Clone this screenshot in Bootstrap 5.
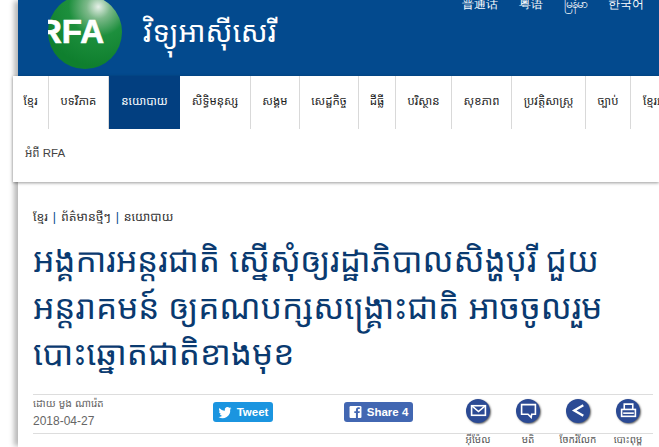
<!DOCTYPE html>
<html lang="km">
<head>
  <meta charset="UTF-8">
  <meta name="viewport" content="width=device-width, initial-scale=1.0">
  <title>RFA Khmer</title>
  <link href="https://cdn.jsdelivr.net/npm/bootstrap@5.3.0/dist/css/bootstrap.min.css" rel="stylesheet">
  <style>
    html, body { height: 447px; overflow: hidden; }
    body { background: #fff; font-family: "Liberation Sans", "Noto Sans Khmer", "Noto Sans", sans-serif; }
    .page-wrap { margin-left: 18px; height: 447px; width: 641px; box-shadow: -5px 0 5px -1px rgba(0,0,0,.28); }
    .site-head { height: 76px; background: #034a8e; color: #fff; overflow: hidden; }
    .site-logo { margin-left: 30px; margin-top: -5px; flex: 0 0 74px; }
    .site-name { font-size: 29px; margin-left: 21px; margin-top: 9px; line-height: 46px; white-space: nowrap; }
    .lang-list { margin-left: auto; margin-top: -6px; margin-right: 15px; gap: 21px; font-size: 12px; line-height: 20px; white-space: nowrap; }
    .menu-box { margin-left: -5px; width: 646px; height: 106px; background: #fff; box-shadow: 0 1px 3px rgba(0,0,0,.4); overflow: hidden; }
    .menu-row { height: 53px; white-space: nowrap; }
    .menu-cell { height: 53px; line-height: 50px; font-size: 11.5px; color: #222; border-right: 1px solid #d9d9d9; text-align: center; flex: none; }
    .menu-cell.on { background: #023f80; color: #fff; border-right: 0; }
    .menu-end { border-right: 0; text-align: left; padding-left: 12px; }
    .menu-low { line-height: 48px; color: #444; }
    .crumbs { margin: 27px 0 0 15px; font-size: 12.3px; line-height: 16px; color: #333; }
    .crumbs span { color: #034a8e; padding: 0 1.500px; }
    .story-title { margin: 13px 0 0 15px; font-size: 33.4px; line-height: 46.5px; font-weight: 400; color: #0a3a70; white-space: nowrap; }
    .story-meta { margin: 16px 0 0 15px; width: 620px; height: 40px; border-top: 1px solid #ddd; border-bottom: 1px solid #ddd; }
    .byline { width: 180px; font-size: 10.5px; line-height: 14px; color: #666; padding-top: 1px; }
    .byline div + div { font-size: 12px; line-height: 17px; margin-top: 3px; }
    .social-btn { height: 20px; border-radius: 3px; color: #fff; font: 700 11.5px/20px "Liberation Sans", sans-serif; margin-top: 7px; gap: 5px; }
    .tw-btn { width: 60px; background: #1b95e0; }
    .fb-btn { width: 69px; background: #4267b2; margin-left: 71px; }
    .tool-item { width: 50px; text-align: center; }
    .tool-list { margin-left: 40px; }
    .tool-ball { width: 24px; height: 24px; border-radius: 50%; background: #2b4a94; box-shadow: 1px 1px 2px rgba(0,0,0,.6); margin: 4px auto 0; }
    .tool-label { font-size: 10px; line-height: 12px; color: #555; margin-top: 11px; white-space: nowrap; }
  </style>
</head>
<body>
<div class="page-wrap">
  <div class="site-head d-flex">
    <svg class="site-logo" width="74" height="74" viewBox="0 0 74 74">
      <defs>
        <radialGradient id="ballFill" cx="0.68" cy="0.16" r="0.8">
          <stop offset="0" stop-color="#e6f0e8"/>
          <stop offset="0.2" stop-color="#7db98a"/>
          <stop offset="0.5" stop-color="#1d8f3d"/>
          <stop offset="1" stop-color="#0f7f2e"/>
        </radialGradient>
      </defs>
      <circle cx="37" cy="37" r="37" fill="url(#ballFill)"/>
      <text x="56" y="48" text-anchor="end" font-family="Liberation Sans" font-weight="700" font-size="33" stroke="#fff" stroke-width=".7" fill="#fff">RFA</text>
    </svg>
    <div class="site-name">វិទ្យុអាស៊ីសេរី</div>
    <div class="lang-list d-flex">
      <span>普通话</span><span>粤语</span><span>မြန်မာ</span><span>한국어</span>
    </div>
  </div>
  <div class="menu-box">
    <div class="menu-row d-flex">
      <div class="menu-cell" style="width:36px">ខ្មែរ</div>
      <div class="menu-cell" style="width:60px">បទវិភាគ</div>
      <div class="menu-cell on" style="width:71px">នយោបាយ</div>
      <div class="menu-cell" style="width:71px">សិទ្ធិមនុស្ស</div>
      <div class="menu-cell" style="width:49px">សង្គម</div>
      <div class="menu-cell" style="width:59px">សេដ្ឋកិច្ច</div>
      <div class="menu-cell" style="width:37px">ដីធ្លី</div>
      <div class="menu-cell" style="width:56px">បរិស្ថាន</div>
      <div class="menu-cell" style="width:60px">សុខភាព</div>
      <div class="menu-cell" style="width:74px">ប្រវត្តិសាស្ត្រ</div>
      <div class="menu-cell" style="width:45px">ច្បាប់</div>
      <div class="menu-cell menu-end" style="width:70px">ខ្មែរអាមេរិក</div>
    </div>
    <div class="menu-row d-flex">
      <div class="menu-cell menu-end menu-low" style="width:80px">អំពី RFA</div>
    </div>
  </div>
  <div class="crumbs">ខ្មែរ <span>|</span> ព័ត៌មានថ្មីៗ <span>|</span> នយោបាយ</div>
  <h1 class="story-title">អង្គការអន្តរជាតិ ស្នើសុំឲ្យរដ្ឋាភិបាលសិង្ហបុរី ជួយ<br>អន្តរាគមន៍ ឲ្យគណបក្សសង្គ្រោះជាតិ អាចចូលរួម<br>បោះឆ្នោតជាតិខាងមុខ</h1>
  <div class="story-meta d-flex">
    <div class="byline"><div>ដោយ មួង ណារ៉េត</div><div>2018-04-27</div></div>
    <div class="social-btn tw-btn d-flex justify-content-center">
      <svg width="14" height="20" viewBox="0 0 24 24" fill="#fff"><path d="M23 5.500c-.8.4-1.700.6-2.600.7.9-.6 1.600-1.400 2-2.500-.9.500-1.800.9-2.900 1.100A4.600 4.600 0 0 0 11.700 9c0 .4 0 .7.1 1C8 9.800 4.600 8 2.400 5.200c-1.300 2.100-.6 4.700 1.400 6.100-.8 0-1.500-.2-2.100-.6 0 2.200 1.600 4.100 3.700 4.500-.7.2-1.400.2-2.100.1.600 1.800 2.300 3.100 4.300 3.200A9.300 9.300 0 0 1 .8 20.400 13 13 0 0 0 20.800 7.800c.9-.6 1.600-1.400 2.200-2.300z"/></svg>
      <span>Tweet</span>
    </div>
    <div class="social-btn fb-btn d-flex justify-content-center">
      <svg width="13" height="20" viewBox="0 0 24 24"><rect x="1" y="1" width="22" height="22" rx="2" fill="#fff"/><path fill="#4267b2" d="M16.500 23v-9h3l.5-3.500h-3.500V8.300c0-1 .3-1.700 1.800-1.700H20V3.500c-.3 0-1.400-.1-2.700-.1-2.700 0-4.500 1.600-4.500 4.600v2.500H9.800V14h3v9z"/></svg>
      <span>Share 4</span>
    </div>
    <div class="tool-list d-flex">
      <div class="tool-item">
        <div class="tool-ball d-flex align-items-center justify-content-center"><svg width="17" height="17" viewBox="0 0 16 16" fill="none" stroke="#fff" stroke-width="1.500"><rect x="1.500" y="3.500" width="13" height="9"/><path d="M1.500 3.500 8 9l6.500-5.500"/></svg></div>
        <div class="tool-label">អ៊ីម៉ែល</div>
      </div>
      <div class="tool-item">
        <div class="tool-ball d-flex align-items-center justify-content-center"><svg width="17" height="17" viewBox="0 0 16 16" fill="none" stroke="#fff" stroke-width="1.500"><path d="M1.500 2.500h13v9h-3.500l-.5 3-3-3H1.500z"/></svg></div>
        <div class="tool-label">មតិ</div>
      </div>
      <div class="tool-item">
        <div class="tool-ball d-flex align-items-center justify-content-center"><svg width="17" height="17" viewBox="0 0 16 16" fill="#fff" stroke="#fff" stroke-width="2.200"><path d="M12.500 3 4 8l8.500 5" fill="none"/></svg></div>
        <div class="tool-label">ចែករំលែក</div>
      </div>
      <div class="tool-item">
        <div class="tool-ball d-flex align-items-center justify-content-center"><svg width="17" height="17" viewBox="0 0 16 16" fill="none" stroke="#fff" stroke-width="1.500"><path d="M4 7V2h8v5"/><rect x="1.500" y="7" width="13" height="6.500"/><path d="M3 10.500h10"/></svg></div>
        <div class="tool-label">បោះពុម្ព</div>
      </div>
    </div>
  </div>
</div>
<script src="https://cdn.jsdelivr.net/npm/bootstrap@5.3.0/dist/js/bootstrap.bundle.min.js"></script>
</body>
</html>
